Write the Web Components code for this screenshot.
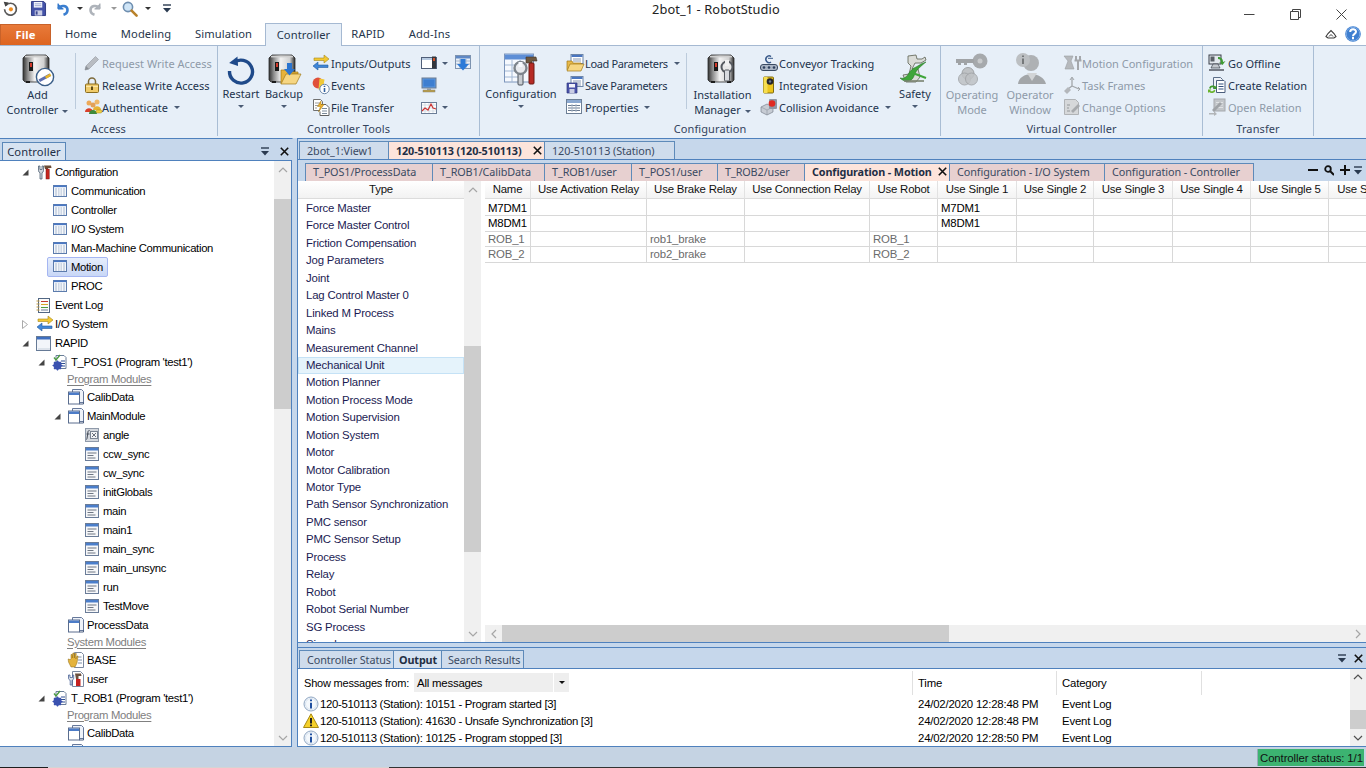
<!DOCTYPE html>
<html lang="en"><head><meta charset="utf-8"><title>2bot_1 - RobotStudio</title>
<style>
html,body{margin:0;padding:0;background:#fff}
body{width:1366px;height:768px;overflow:hidden;font-family:"Liberation Sans",sans-serif}
</style></head>
<body>
<rs-app>
  <rs-titlebar></rs-titlebar>
  <rs-ribbon-tabs></rs-ribbon-tabs>
  <rs-ribbon>
    <rs-group label="Access" style="width:218px">
      <rs-large icon="addctrl" style="width:75px" caret="inline">Add<br>Controller</rs-large>
      <rs-vsep></rs-vsep>
      <rs-col style="margin-left:8px;--iw:18px">
        <rs-small icon="pencil" disabled>Request Write Access</rs-small>
        <rs-small icon="lock">Release Write Access</rs-small>
        <rs-small icon="people" caret>Authenticate</rs-small>
      </rs-col>
    </rs-group>
    <rs-group label="Controller Tools" style="width:262px">
      <rs-large icon="restart" one style="width:42px;margin-left:2px" caret="below">Restart</rs-large>
      <rs-large icon="backup" one style="width:44px" caret="below">Backup</rs-large>
      <rs-col style="margin-left:6px;width:109px">
        <rs-small icon="io">Inputs/Outputs</rs-small>
        <rs-small icon="events">Events</rs-small>
        <rs-small icon="transfer">File Transfer</rs-small>
      </rs-col>
      <rs-col style="width:34px">
        <rs-small icon="window" caret></rs-small>
        <rs-small icon="monitor"></rs-small>
        <rs-small icon="chart" caret></rs-small>
      </rs-col>
      <rs-col>
        <rs-small icon="download"></rs-small>
      </rs-col>
    </rs-group>
    <rs-group label="Configuration" style="width:461px">
      <rs-large icon="config" one style="width:82px" caret="below">Configuration</rs-large>
      <rs-col style="margin-left:4px;width:120px">
        <rs-small icon="loadp" caret style="letter-spacing:-.35px">Load Parameters</rs-small>
        <rs-small icon="savep" style="letter-spacing:-.3px">Save Parameters</rs-small>
        <rs-small icon="props" caret>Properties</rs-small>
      </rs-col>
      <rs-vsep></rs-vsep>
      <rs-large icon="install" style="width:71px" caret="inline">Installation<br>Manager</rs-large>
      <rs-col style="margin-left:2px;width:135px">
        <rs-small icon="conveyor">Conveyor Tracking</rs-small>
        <rs-small icon="vision">Integrated Vision</rs-small>
        <rs-small icon="collision" caret>Collision Avoidance</rs-small>
      </rs-col>
      <rs-large icon="safety" one style="width:40px" caret="below">Safety</rs-large>
    </rs-group>
    <rs-group label="Virtual Controller" style="width:262px">
      <rs-large icon="key" style="width:60px;margin-left:1px" disabled>Operating<br>Mode</rs-large>
      <rs-large icon="person" style="width:56px" disabled>Operator<br>Window</rs-large>
      <rs-col style="margin-left:5px">
        <rs-small icon="motion" disabled>Motion Configuration</rs-small>
        <rs-small icon="frames" disabled>Task Frames</rs-small>
        <rs-small icon="options" disabled>Change Options</rs-small>
      </rs-col>
    </rs-group>
    <rs-group label="Transfer" style="width:111px">
      <rs-col style="margin-left:5px;--iw:20px">
        <rs-small icon="offline">Go Offline</rs-small>
        <rs-small icon="relation">Create Relation</rs-small>
        <rs-small icon="openrel" disabled>Open Relation</rs-small>
      </rs-col>
    </rs-group>
  </rs-ribbon>
  <rs-workspace>
    <rs-tree-panel slot="left">
      <rs-tree-row level="0" exp="open" icon="t-wrench">Configuration</rs-tree-row>
      <rs-tree-row level="1" icon="t-table">Communication</rs-tree-row>
      <rs-tree-row level="1" icon="t-table">Controller</rs-tree-row>
      <rs-tree-row level="1" icon="t-table">I/O System</rs-tree-row>
      <rs-tree-row level="1" icon="t-table">Man-Machine Communication</rs-tree-row>
      <rs-tree-row level="1" icon="t-table" selected>Motion</rs-tree-row>
      <rs-tree-row level="1" icon="t-table">PROC</rs-tree-row>
      <rs-tree-row level="0" icon="t-log">Event Log</rs-tree-row>
      <rs-tree-row level="0" exp="closed" icon="io">I/O System</rs-tree-row>
      <rs-tree-row level="0" exp="open" icon="t-rapid">RAPID</rs-tree-row>
      <rs-tree-row level="1" exp="open" icon="t-task">T_POS1 (Program 'test1')</rs-tree-row>
      <rs-tree-label>Program Modules</rs-tree-label>
      <rs-tree-row level="2" icon="t-module">CalibData</rs-tree-row>
      <rs-tree-row level="2" exp="open" icon="t-module">MainModule</rs-tree-row>
      <rs-tree-row level="3" icon="t-fn">angle</rs-tree-row>
      <rs-tree-row level="3" icon="t-proc">ccw_sync</rs-tree-row>
      <rs-tree-row level="3" icon="t-proc">cw_sync</rs-tree-row>
      <rs-tree-row level="3" icon="t-proc">initGlobals</rs-tree-row>
      <rs-tree-row level="3" icon="t-proc">main</rs-tree-row>
      <rs-tree-row level="3" icon="t-proc">main1</rs-tree-row>
      <rs-tree-row level="3" icon="t-proc">main_sync</rs-tree-row>
      <rs-tree-row level="3" icon="t-proc">main_unsync</rs-tree-row>
      <rs-tree-row level="3" icon="t-proc">run</rs-tree-row>
      <rs-tree-row level="3" icon="t-proc">TestMove</rs-tree-row>
      <rs-tree-row level="2" icon="t-module">ProcessData</rs-tree-row>
      <rs-tree-label>System Modules</rs-tree-label>
      <rs-tree-row level="2" icon="t-hand">BASE</rs-tree-row>
      <rs-tree-row level="2" icon="t-user">user</rs-tree-row>
      <rs-tree-row level="1" exp="open" icon="t-task">T_ROB1 (Program 'test1')</rs-tree-row>
      <rs-tree-label>Program Modules</rs-tree-label>
      <rs-tree-row level="2" icon="t-module">CalibData</rs-tree-row>
      <rs-tree-row level="2" icon="t-module"></rs-tree-row>
    </rs-tree-panel>
    <rs-doc-area slot="right"></rs-doc-area>
    <rs-output slot="bottom"></rs-output>
  </rs-workspace>
  <rs-statusbar></rs-statusbar>
</rs-app>
<script>
const cab = () => `
<defs><linearGradient id="cf" x1="0" x2="1" y1="0" y2="0"><stop offset="0" stop-color="#333"/><stop offset=".18" stop-color="#8b8b8b"/><stop offset=".45" stop-color="#f2f2f2"/><stop offset=".8" stop-color="#d0d0d0"/><stop offset="1" stop-color="#2a2a2a"/></linearGradient></defs>
<path d="M2 5l3-3h20l3 3v22l-2 2H4l-2-2z" fill="url(#cf)" stroke="#2b2b2b" stroke-width=".8"/>
<path d="M4 3.600h22" stroke="#cfcfcf" stroke-width="1.600"/>
<path d="M5 28v2h4v-2zM21 28v2h4v-2z" fill="#1c1c1c"/>
<rect x="8" y="9" width="4" height="9" fill="#1a1a1a"/><rect x="9" y="10" width="2" height="4" fill="#d33a2a"/>`;
const ICON = {
 app:[20,`<path d="M4.500 6.500A7 7 0 1 1 3 11" fill="none" stroke="#5a5a5a" stroke-width="2"/><path d="M2 2l6 1-4 5z" fill="#444"/><circle cx="10.500" cy="11" r="2.400" fill="#ee8d22"/>`],
 save:[16,`<path d="M.5.500h13l2 2v13H.5z" fill="#4352a8" stroke="#2c3780"/><rect x="3" y="1" width="9" height="6" fill="#f4f6fb"/><path d="M4 3h7M4 5h7" stroke="#9aa5d0"/><rect x="4" y="10" width="8" height="5.500" fill="#c9cde4"/><rect x="5" y="11" width="2" height="3.500" fill="#3b468f"/>`],
 undo:[14,`<path d="M3 1.500v5.500h5.500" fill="#2f74c8" stroke="#2f74c8"/><path d="M3.500 6.500C6 2.500 12.500 3.500 12.500 8c0 2.500-1.600 4-4 4.800" fill="none" stroke="#3b7fd0" stroke-width="2.600"/>`],
 redo:[14,`<path d="M11 1.500v5.500H5.500" fill="#a8adb5" stroke="#a8adb5"/><path d="M10.500 6.500C8 2.500 1.500 3.500 1.500 8c0 2.500 1.600 4 4 4.800" fill="none" stroke="#aeb3ba" stroke-width="2.600"/>`],
 search:[16,`<circle cx="6" cy="6" r="4.600" fill="#cfe5f7" stroke="#6f8fb0" stroke-width="1.600"/><path d="M9.600 9.600l5 5" stroke="#b9822a" stroke-width="2.600" stroke-linecap="round"/>`],
 pencil:[16,`<path d="M1 15l1-4L11.500 1.500l3 3L5 14z" fill="#b8bcc2" stroke="#9ba0a8" stroke-width=".7"/><path d="M1 15l1-4 3 3z" fill="#8a8f96"/>`],
 lock:[16,`<path d="M4.500 7V4.500a3.500 3.500 0 0 1 7 0V7" fill="none" stroke="#7d6a3a" stroke-width="1.500"/><rect x="1.500" y="7" width="13" height="8.500" rx="1" fill="#f0cb6a" stroke="#8a6d20"/><path d="M2 9.500h12" stroke="#fbe6a8"/><rect x="7" y="9.500" width="2" height="3.500" fill="#5f4a12"/>`],
 people:[18,`<circle cx="5" cy="5" r="2.500" fill="#eda958"/><path d="M1 14c0-5 8-5 8 0z" fill="#d8402a"/><circle cx="13" cy="4" r="2.500" fill="#f0b868"/><path d="M9 12c0-5 8-5 8 0z" fill="#e7b332"/><circle cx="9" cy="7" r="2.500" fill="#e2a058"/><path d="M5 16c0-5.500 8-5.500 8 0z" fill="#3f8a3a"/><rect x="12" y="12" width="6" height="3" rx="1.400" fill="#f0d040" stroke="#a08a10" stroke-width=".5"/>`],
 restart:[30,`<path d="M7.600 7.800A11.500 11.500 0 1 1 3.500 16" fill="none" stroke="#1f4a8a" stroke-width="3.400"/><path d="M11.500 1.500l.6 9.500-9-3z" fill="#1f4a8a"/>`],
 addctrl:[34,cab()+`<circle cx="24" cy="24" r="8.600" fill="#fff" stroke="#3a5e88" stroke-width="1.400"/><path d="M17.500 26.500l11-6 1.500 2.500-11 6z" fill="#5e6fb0"/><path d="M24 23.500l5-3 1.300 2.300-5 3z" fill="#e8b428"/>`],
 backup:[34,cab()+`<path d="M14 31V17h6l2 2h9v2h-6" fill="#e7b23a" stroke="#a07a18" stroke-width=".7"/><path d="M14 31l5-10h15l-5 10z" fill="#f6d683" stroke="#a07a18" stroke-width=".7"/><path d="M20 10h5v6h3l-5.500 6.500L17 16h3z" fill="#2b74cf"/>`],
 io:[18,`<path d="M2 6h10V3l5 4-5 4V8.500H2z" transform="translate(0 -2)" fill="#f2c832" stroke="#a4861a" stroke-width=".6"/><path d="M16 11H6V8l-5 4 5 4v-2.500h10z" fill="#3f86d8" stroke="#235a9c" stroke-width=".6"/>`],
 events:[18,`<circle cx="6" cy="7" r="5.400" fill="#e0503a"/><path d="M7.500 2.500l5 1-2 11-4-1z" fill="#f0c838"/><circle cx="12.500" cy="13" r="4.700" fill="#fff" stroke="#6c87a8"/><path d="M12.500 12v4M12.500 9.800v1.200" stroke="#2f5f9f" stroke-width="1.600"/>`],
 transfer:[18,`<path d="M1.500 1.500h7l2 2v9h-9z" fill="#fff" stroke="#707070"/><path d="M3 5h5M3 7.500h4M3 10h2" stroke="#9a9a9a"/><path d="M8 6.500h6l3 3v8H8v-4" fill="#fff" stroke="#606060"/><path d="M10 10.500h5M10 13h5M10 15.500h5" stroke="#7a8a9a"/><path d="M9 3L5.500 8.500h3L6.500 14l5.500-7.500H9z" fill="#edb02e" stroke="#a57a10" stroke-width=".5"/>`],
 window:[16,`<rect x=".5" y="2.500" width="15" height="11" fill="#fff" stroke="#4f5e78"/><rect x="1" y="3" width="14" height="2" fill="#b8cbe2"/><rect x="11" y="1.500" width="4" height="12" fill="#33363c"/><rect x="12" y="3" width="2" height="3" fill="#d0502a"/>`],
 monitor:[16,`<rect x="1" y="1" width="14" height="10" fill="#5c98e0" stroke="#6a7a90"/><rect x="2.500" y="2.500" width="11" height="7" fill="#3e7ed0"/><rect x="6" y="11" width="4" height="2" fill="#9aa5b0"/><rect x="2" y="13" width="12" height="2" fill="#c0a040" stroke="#7f7f7f" stroke-width=".5"/>`],
 chart:[16,`<rect x=".5" y="3.500" width="15" height="11" fill="#fff" stroke="#6b7d97"/><path d="M1 6h14M1 9h14M1 12h14M4 4v10M8 4v10M12 4v10" stroke="#c8d2de" stroke-width=".7"/><path d="M1 12l3-3 3 2 3-6 2 4 3 1" fill="none" stroke="#cc3535" stroke-width="1.200"/>`],
 download:[16,`<rect x=".5" y=".5" width="15" height="13" fill="#e9f0fa" stroke="#7d93b0"/><rect x="1" y="1" width="14" height="2.500" fill="#5f88c4"/><path d="M1 6h14M1 9h14M5 4v9M11 4v9" stroke="#a6b6ca"/><path d="M5.500 4h5v5h3.500l-6 6.500L2 9h3.500z" fill="#2b7ad8"/>`],
 config:[34,`<rect x=".5" y="1" width="29" height="28" fill="#f6f9fe" stroke="#7c95bb"/><rect x="1" y="1.500" width="28" height="5" fill="#5d8ed6"/><path d="M1 12h22M1 18h18M1 24h16M8 7v22M16 7v22" stroke="#a3b8d4"/><rect x="14" y="19" width="5" height="13" rx="1" fill="#c8ccd2" stroke="#4a5058"/><circle cx="16.500" cy="15" r="6" fill="#e8eaee" stroke="#7d848c" stroke-width="2.400"/><path d="M14.500 9v5h4V9" fill="#f6f9fe"/><path d="M22 4h10l1 4h-5v2h-6z" fill="#6e5840" stroke="#3e3228" stroke-width=".6"/><rect x="25" y="10" width="5" height="21" rx="1" fill="#b62a25" stroke="#6d1a15"/>`],
 loadp:[18,`<rect x="5" y=".5" width="12" height="9" fill="#fff" stroke="#6d85a8"/><rect x="5.500" y="1" width="11" height="2" fill="#4a76c0"/><path d="M7 5h8M7 7h8" stroke="#8a9ab4"/><path d="M1 16V7h5l1 2h8v2" fill="#e8b94a" stroke="#a07a18" stroke-width=".7"/><path d="M1 17l3-7h14l-3 7z" fill="#f6d683" stroke="#a07a18" stroke-width=".7"/>`],
 savep:[18,`<rect x="5" y=".5" width="12" height="10" fill="#fff" stroke="#6d85a8"/><rect x="5.500" y="1" width="11" height="2" fill="#4a76c0"/><path d="M7 5h8M7 7h8M7 9h8" stroke="#8a9ab4"/><path d="M1 7h10v10H1z" fill="#4a52a8" stroke="#2c3780" stroke-width=".7"/><rect x="3" y="8" width="6" height="3.500" fill="#f0f2fa"/><rect x="3.500" y="13" width="5" height="4" fill="#c9cde4"/>`],
 props:[16,`<rect x=".5" y=".5" width="15" height="14" fill="#fff" stroke="#6d7f96"/><rect x="1" y="1" width="14" height="3" fill="#8ba8d0"/><path d="M2 6.500h12M2 9h12M2 11.500h12" stroke="#6a7a90"/><path d="M6 5v8M10 5v8" stroke="#a8b6c8"/>`],
 install:[34,cab()+`<circle cx="21" cy="14" r="5.500" fill="#e8e8e8" stroke="#55595f" stroke-width="2"/><rect x="18.500" y="17" width="5" height="11" rx="1" fill="#d8dade" stroke="#55595f"/><path d="M19 7v6h4V7" fill="#f0f0f0"/>`],
 conveyor:[18,`<path d="M11 2.500A3.300 3.300 0 1 0 11 8" fill="none" stroke="#3a5a8a" stroke-width="1.500"/><path d="M8 4.300h5" stroke="#3a5a8a"/><rect x=".5" y="10.500" width="17" height="6" rx="2.500" fill="#a9b4c4" stroke="#3a4a62"/><circle cx="4" cy="13.500" r="1.300" fill="#2d3f5c"/><circle cx="9" cy="13.500" r="1.300" fill="#2d3f5c"/><circle cx="14" cy="13.500" r="1.300" fill="#2d3f5c"/>`],
 vision:[18,`<rect x="3.500" y="1" width="10" height="16" rx="1" fill="#edc51c" stroke="#7e6a10"/><rect x="3.500" y="1" width="4" height="16" fill="#f6de50"/><circle cx="10" cy="5.500" r="3.300" fill="#24242a"/><circle cx="10" cy="5.500" r="1.200" fill="#6a7a90"/>`],
 collision:[18,`<path d="M1 9l6-3 6 3v5l-6 3-6-3z" fill="#c7ccd4" stroke="#6c7480" stroke-width=".6"/><path d="M7 12l6-3M7 12v5M7 12L1 9" stroke="#8d95a0" stroke-width=".6"/><rect x="9" y="1" width="8" height="10" rx="1" fill="#8e96a4"/><circle cx="12" cy="5.500" r="3.300" fill="#e02a22"/>`],
 safety:[34,`<path d="M10 3l8-1 1 4h5l3-2 1 3-5 3-6 0-3 6h6l2 8-4 5H8L5 22l6-1 2-8-3-3z" fill="#dadcd8" stroke="#5a6050" stroke-width=".8"/><path d="M2 25c8 2 8-7 14-10s8-5 12-6c-6 5-10 8-12 14s-9 7-14 2z" fill="#3fa53a" stroke="#1f6a1e" stroke-width=".5"/><path d="M12 19l16 6" stroke="#3fa53a" stroke-width="2"/><path d="M6 28h20" stroke="#7a8270" stroke-width="1.600"/>`],
 key:[34,`<circle cx="25" cy="8" r="7.500" fill="#a6a9ac"/><circle cx="25" cy="8" r="2.500" fill="#c8cacc"/><path d="M1 6h18v4H12v2H9v-2H6v2H3v-2H1z" fill="#a0a3a6"/><circle cx="13" cy="20.500" r="6" fill="#bfc2c5" stroke="#9fa2a5"/><circle cx="9.500" cy="26" r="6" fill="#bfc2c5" opacity=".85" stroke="#9fa2a5"/><circle cx="16.500" cy="26" r="6" fill="#bfc2c5" opacity=".85" stroke="#9fa2a5"/>`],
 person:[34,`<circle cx="18" cy="10" r="8" fill="#aeb1b4"/><path d="M5 31c1-13 25-13 28 0z" fill="#a3a6a9"/><circle cx="10" cy="7" r="7" fill="#bcbfc2"/><path d="M10 5.500v5.500M10 2.500v1.500" stroke="#6d7073" stroke-width="1.800"/><path d="M14 20l5 8 5-8" fill="#d2d4d6"/>`],
 motion:[18,`<path d="M1 2h9l-2 5 3 8H2l3-8z" fill="#b6b9bd" stroke="#9a9da2" stroke-width=".6"/><path d="M13 2v5M17 2v5M11.500 6.500h7M15 7v9" stroke="#a4a7ab" stroke-width="2"/>`],
 frames:[18,`<path d="M9 10V2M9 10l7 3M9 10l-4 3" stroke="#a2a6aa" stroke-width="1.300" fill="none"/><path d="M7 4l2-3 2 3M15 15l2-2-2-2" stroke="#a2a6aa" fill="none"/><path d="M1 15l4-4 3 3-4 4z" fill="#b4b7bb"/>`],
 options:[18,`<path d="M1.500 1.500h11l3 3v12h-14z" fill="#d6d8da" stroke="#b0b3b6"/><path d="M4 7h3M4 10h2M4 13h3" stroke="#94979a" stroke-width="1.200"/><path d="M8 13l7-7 2 2-7 7z" fill="#a7aaad"/>`],
 offline:[18,`<rect x="1" y="1" width="12" height="9" fill="#e3e8ee" stroke="#3a3f48"/><rect x="2.500" y="2.500" width="4" height="5" fill="#5a5f66"/><path d="M3 14l2-4h5l2 4z" fill="#c4c8ce" stroke="#3a3f48" stroke-width=".7"/><path d="M1 16h15" stroke="#3a3f48" stroke-width="1.300"/><path d="M10 3c3 0 5 1.500 5 5l2.500-1-3 4-3.500-3 2 .5c0-2.500-1-3.500-3-3.500z" fill="#3f9a34"/>`],
 relation:[18,`<path d="M5.500 1.500h7l2 2v9h-9z" fill="#eef2f8" stroke="#5b6d88"/><path d="M8.500 4.500h7.500l1 1v11H8.500z" fill="#fff" stroke="#4a5d7c"/><path d="M10.500 8h5M10.500 10.500h5M10.500 13h5" stroke="#33507e"/><path d="M1 12a4 4 0 0 1 6.500-1.500l1-1v3.500H5l1.300-1.200A2.300 2.300 0 0 0 2.500 13z" fill="#3f9a2c"/><path d="M7.500 14.500a4 4 0 0 1-6.500 1.500l-1 1v-3.500h3.500L2.200 14.700a2.300 2.300 0 0 0 3.800-1z" fill="#6ab32c"/>`],
 openrel:[18,`<rect x="6" y="1" width="11" height="12" fill="#c2c5c9" stroke="#a5a8ac"/><path d="M8 4.500h7M8 7h7M8 9.500h7" stroke="#e0e2e4"/><path d="M4 12l8-8 2 2-8 8z" fill="#a0a3a7"/><path d="M1 15h5v-2l3 3-3 2v-1.500H1z" fill="#b2b5b8"/>`],
 't-wrench':[16,`<path d="M2.500 2v4.500a2.500 2.500 0 0 0 1.500 2.300V15h2V8.800A2.500 2.500 0 0 0 7.500 6.500V2L6 2v3.500H4V2z" fill="#cfd4da" stroke="#3c5066" stroke-width=".7"/><path d="M8 1.500h7l.5 2.500H12v1h-3z" fill="#6b4d35"/><rect x="10" y="5" width="3.200" height="10" fill="#c5261f" stroke="#7c1610" stroke-width=".5"/>`],
 't-table':[15,`<g transform="translate(1 0)"><rect x=".5" y="1.500" width="13" height="11" fill="#f4f7fb" stroke="#5c7cad"/><path d="M1 2.300h12" stroke="#4a78c4" stroke-width="1.600"/><path d="M2 5h10M2 7h10M2 9h10M2 11h10" stroke="#9fb0c8" stroke-width=".9"/><path d="M4.500 4v8M7 4v8M9.500 4v8" stroke="#fff" stroke-width=".8"/></g>`],
 't-log':[15,`<rect x="2.500" y=".5" width="11" height="14" fill="#fbfbfb" stroke="#516683"/><path d="M.5 3h3M.5 6h3M.5 9h3M.5 12h3" stroke="#c19a42"/><path d="M5 3.500h7" stroke="#c03a30"/><path d="M5 6.500h7" stroke="#d9a62a"/><path d="M5 9.500h7" stroke="#4c9a40"/><path d="M5 12h7" stroke="#6a7e9a"/>`],
 't-rapid':[15,`<rect x=".5" y=".5" width="14" height="14" fill="#f2f5fa" stroke="#667a96"/><rect x="1" y="1" width="13" height="2.500" fill="#3e6fc0"/><path d="M2 13h12" stroke="#c7d0dc"/>`],
 't-task':[17,`<path d="M4 1.500h8l2 2v11H4z" fill="#fff" stroke="#6a7d9a"/><path d="M2 3.500l2 2.500 4-5" fill="none" stroke="#4a9a40" stroke-width="1.300"/><path d="M9 7h4M9 9.500h4M9 12h4" stroke="#2e4f92"/><circle cx="5.500" cy="11.500" r="4.200" fill="#3b52b0"/><circle cx="5.500" cy="11.500" r="1.500" fill="#dfe6f8"/><path d="M5.500 6.500v10M.5 11.500h10M2 8l7 7M9 8l-7 7" stroke="#3b52b0" stroke-width="1.200"/>`],
 't-module':[16,`<path d="M4.500 .5h9l2 2v11h-11z" fill="#eef2f9" stroke="#66789a"/><rect x=".5" y="3" width="11" height="12" fill="#fff" stroke="#5a6d8e"/><rect x="1" y="3.500" width="10" height="2.500" fill="#4c7cc8"/><path d="M11.500 15h4V13" fill="none" stroke="#4d5f80"/>`],
 't-fn':[15,`<g transform="translate(1 0)"><rect x=".5" y=".5" width="13" height="13" fill="#d4d8de" stroke="#8f9aaa"/><path d="M4.500 2.500C3 2.500 3 3.500 2.800 5l-.8 5.500c-.2 1-1 1-1 1M1.500 6h3" fill="none" stroke="#454c58"/><rect x="5.500" y="3.500" width="7" height="7" fill="#f3f4f6" stroke="#7a8492"/><path d="M7 5l4 4M11 5l-4 4" stroke="#59616e" stroke-width=".9"/></g>`],
 't-proc':[15,`<g transform="translate(1 0)"><rect x=".5" y=".5" width="13" height="13" fill="#f6f7f9" stroke="#6a7c98"/><rect x="1" y="1" width="12" height="2.500" fill="#4a7ecb"/><path d="M2.500 6h9M2.500 8.500h6M2.500 11h8" stroke="#6e7683"/></g>`],
 't-hand':[16,`<path d="M6.500 .5h7l2 2v13h-9z" fill="#fff" stroke="#7a889e"/><path d="M9.500 5h4M10 8h4M10 11h4" stroke="#7f90a8"/><path d="M3 7V2.500h1.300V6l.6-5h1.300l.1 5 .8-4.500h1.200L7.800 7l1.200-3h1l-1 7-2 4H3l-2.500-5-.3-3h1L2 8z" fill="#e4b33c" stroke="#8d6a14" stroke-width=".5"/>`],
 't-user':[16,`<path d="M4.500 .5h8l3 3v12h-11z" fill="#fff" stroke="#7a889e"/><path d="M.5 4v3c0 1.300.8 2 1.700 2.300V14H4V9.300C5 9 5.700 8.300 5.700 7V4L4.500 4v2.500H2V4z" fill="#dfe3e8" stroke="#36528c" stroke-width=".7"/><rect x="8" y="8" width="4.500" height="7" fill="#c5221f"/><path d="M7 2.500h6l.5 2.500h-3v3H8z" fill="#6d5240"/>`],
 info:[16,`<circle cx="8" cy="8" r="7" fill="#f4f8fc" stroke="#8fa6c2"/><circle cx="8" cy="8" r="5.500" fill="none" stroke="#d9e4f0"/><path d="M8 6.800V12.500" stroke="#1f4fa0" stroke-width="2"/><path d="M8 3.500v1.800" stroke="#1f4fa0" stroke-width="2"/>`],
 warn:[16,`<path d="M8 .8L15.500 14.500H.5z" fill="#f5d02a" stroke="#a88a14" stroke-linejoin="round"/><path d="M8 5v5.500" stroke="#222" stroke-width="2"/><path d="M8 11.500v1.800" stroke="#222" stroke-width="2"/>`],
 help:[16,`<circle cx="8" cy="8" r="7.800" fill="#3f7fd0"/><circle cx="8" cy="8" r="6.800" fill="none" stroke="#7aaae4"/><path d="M5.200 6c0-3.600 5.800-3.600 5.800-.2 0 2.200-3 2-3 4.400" fill="none" stroke="#fff" stroke-width="2"/><path d="M8 11v2.200" stroke="#fff" stroke-width="2"/>`],
 collapse:[12,`<path d="M1 8.500l2-3 3-3 3 3 2 3-2 1.500H3z" fill="none" stroke="#3a3a3a" stroke-width="1.100"/><path d="M4 8.500l2-2 2 2" fill="none" stroke="#3a3a3a"/>`],
};

function el(name, css, html, setup){
  customElements.define(name, class extends HTMLElement{
    connectedCallback(){
      if(this.shadowRoot) return;
      const r=this.attachShadow({mode:'open'});
      r.innerHTML=`<style>${css}</style>`+(typeof html==='function'?html(this):html);
      if(setup) setup(this,r);
    }
  });
}

el('rs-icon',':host{display:inline-flex;flex:none;line-height:0}svg{display:block;overflow:visible}',h=>{
  const d=ICON[h.getAttribute('name')]||[16,''];
  const vb=d[0]; const sz=h.getAttribute('size')||vb;
  return `<svg xmlns="http://www.w3.org/2000/svg" width="${sz}" height="${sz}" viewBox="0 0 ${vb} ${vb}">${d[1]}</svg>`;
});
el('rs-caret',':host{display:inline-block;flex:none;width:0;height:0;border:3px solid transparent;border-bottom:0;border-top:3px solid var(--c,#4a5b74);vertical-align:middle}','');
el('rs-x',':host{display:inline-flex;flex:none;line-height:0}',`<svg width="9" height="9" viewBox="0 0 9 9"><path d="M.8.800l7.400 7.400M8.200.800L.8 8.200" stroke="#111" stroke-width="1.600"/></svg>`);
el('rs-menu-glyph',':host{display:inline-flex;flex:none;line-height:0}',`<svg width="10" height="9" viewBox="0 0 10 9"><path d="M1 1h8" stroke="#2a3a50" stroke-width="1.400"/><path d="M1 4h8L5 8.500z" fill="#2a3a50"/></svg>`);

el('rs-app',':host{display:flex;flex-direction:column;width:1366px;height:768px;overflow:hidden;background:#c6d7eb;color:#000;font-family:"Liberation Sans",sans-serif}','<slot></slot>');

el('rs-titlebar',`:host{display:flex;flex:none;height:23px;background:#fff;font:12.8px "Noto Sans",sans-serif;color:#222}
.qat{display:flex;align-items:center;width:652px;height:17px;flex:none}
.t{width:125px;flex:none;line-height:19px;white-space:nowrap;letter-spacing:.1px}
.win{margin-left:auto;display:flex;height:28px;align-items:center;padding-right:2px}
.win span{display:flex;width:46px;justify-content:center;line-height:0}
rs-caret{--c:#333}`,`
<div class="qat">
 <rs-icon name="app" size="17" style="margin-left:2px"></rs-icon>
 <rs-icon name="save" size="15" style="margin-left:12px"></rs-icon>
 <rs-icon name="undo" style="margin-left:9px"></rs-icon><rs-caret style="margin-left:8px"></rs-caret>
 <rs-icon name="redo" style="margin-left:6px"></rs-icon><rs-caret style="margin-left:8px;--c:#999"></rs-caret>
 <rs-icon name="search" style="margin-left:5px"></rs-icon><rs-caret style="margin-left:7px"></rs-caret>
 <rs-menu-glyph style="margin-left:11px"></rs-menu-glyph>
</div>
<div class="t">2bot_1 - RobotStudio</div>
<div class="win">
 <span><svg width="11" height="11"><path d="M0 5.500h10.500" stroke="#444"/></svg></span>
 <span><svg width="11" height="11"><path d="M.5 2.500h8v8h-8zM2.500 2.500v-2h8v8h-2" fill="none" stroke="#444"/></svg></span>
 <span><svg width="11" height="11"><path d="M.5.500l10 10M10.500.500l-10 10" stroke="#444"/></svg></span>
</div>`);

el('rs-ribbon-tabs',`:host{display:flex;flex:none;height:22px;background:#fff;font:11.2px "Noto Sans",sans-serif;color:#26364c;letter-spacing:.1px;position:relative;z-index:2;white-space:nowrap}
.f{width:51px;height:21px;margin-top:1px;box-sizing:border-box;background:linear-gradient(#e87a3a,#dd6420);border:1px solid #c8622a;border-bottom:0;color:#fff;font-weight:700;display:flex;align-items:center;justify-content:center;padding-bottom:1px}
.t{height:22px;display:flex;align-items:center;justify-content:center;flex:none;box-sizing:border-box;padding-bottom:1px}
.a{background:#e7eff8;border:1px solid #a5b9d2;border-bottom:0;height:23px}
.r{margin-left:auto;display:flex;align-items:center;gap:8px;padding-right:5px}`,`
<div class="f">File</div>
<div class="t" style="width:60px">Home</div>
<div class="t" style="width:50px;margin-left:10px">Modeling</div>
<div class="t" style="width:55px;margin-left:25px">Simulation</div>
<div class="t a" style="width:77px;margin-left:14px">Controller</div>
<div class="t" style="width:30px;margin-left:11px">RAPID</div>
<div class="t" style="width:41px;margin-left:26px">Add-Ins</div>
<div class="r"><rs-icon name="collapse"></rs-icon><rs-icon name="help"></rs-icon></div>`);

el('rs-ribbon',`:host{display:flex;flex:none;height:90px;background:#e7eff8;border-top:1px solid #a5b9d2}`,'<slot></slot>');

el('rs-group',`:host{display:flex;flex-direction:column;flex:none;box-sizing:border-box;height:90px;border-right:1px solid #a9bdd4;font:11px "Noto Sans",sans-serif;color:#22334d}
.c{flex:1;display:flex;min-height:0;padding-top:6px}
.l{height:14px;line-height:14px;text-align:center;color:#33435c;white-space:nowrap;letter-spacing:.1px;flex:none}`,
h=>`<div class="c"><slot></slot></div><div class="l">${h.getAttribute('label')}</div>`);

el('rs-vsep',':host{display:block;flex:none;width:1px;height:56px;margin-top:1px;background:#bccbdc}','');
el('rs-col',':host{display:flex;flex-direction:column;flex:none}','<slot></slot>');

el('rs-small',`:host{display:flex;align-items:center;height:22px;flex:none;white-space:nowrap}
:host([disabled]){color:#8e9aa8}
.i{width:var(--iw,19px);flex:none;display:flex;align-items:center;height:18px}
.n{width:21px}
rs-caret{margin-left:6px}
.n + slot + rs-caret{margin-left:0}`,h=>{
  const ic=h.getAttribute('icon'), empty=!h.textContent.trim();
  return `<span class="i${empty?' n':''}"><rs-icon name="${ic}"></rs-icon></span><slot></slot>${h.hasAttribute('caret')?'<rs-caret></rs-caret>':''}`;
});

el('rs-large',`:host{display:flex;flex-direction:column;align-items:center;flex:none;height:68px;line-height:15px;text-align:center;white-space:nowrap}
:host([disabled]){color:#8e9aa8}
.i{height:35px;display:flex;align-items:center;justify-content:center;flex:none}
:host([one]) .t{margin-top:-1px}
.b{display:block;margin:4px 0 0}
rs-caret{margin-left:4px}`,h=>{
  const c=h.getAttribute('caret');
  return `<div class="i"><rs-icon name="${h.getAttribute('icon')}"></rs-icon></div><div class="t"><slot></slot>${c==='inline'?'<rs-caret></rs-caret>':''}</div>${c==='below'?'<rs-caret class="b"></rs-caret>':''}`;
});

el('rs-workspace',`:host{display:grid;flex:none;height:611px;box-sizing:border-box;border-top:2px solid #e7eff8;grid-template-columns:293px 4px 1069px;grid-template-rows:505px 104px;background:#c6d7eb}
.l{grid-row:1/3;grid-column:1}.r{grid-row:1;grid-column:3;min-width:0;min-height:0}.b{grid-row:2;grid-column:3;min-width:0;min-height:0}
.m{grid-row:1/3;grid-column:2}`,`
<div class="l"><slot name="left"></slot></div><div class="m"></div>
<div class="r"><slot name="right"></slot></div><div class="b"><slot name="bottom"></slot></div>`);

el('rs-scrollbar',`:host{display:flex;flex:none;background:#f0f0f0}
:host([o=v]){flex-direction:column;width:var(--s,17px)}
:host([o=h]){flex-direction:row;height:var(--s,17px)}
.a{flex:none;width:100%;height:100%;display:flex;align-items:center;justify-content:center}
:host([o=v]) .a{height:var(--s,17px)}
:host([o=h]) .a{width:var(--s,17px);height:100%}
.t{background:#cdcdcd;flex:none}
.g{flex:1}`,h=>{
  const v=h.getAttribute('o')==='v', st=+h.getAttribute('start'), len=+h.getAttribute('len');
  const up=v?'M1 5l4-4 4 4':'M5 1L1 5l4 4', dn=v?'M1 1l4 4 4-4':'M1 1l4 4-4 4';
  const ch=d=>`<svg width="${v?10:6}" height="${v?6:10}" viewBox="0 0 ${v?10:6} ${v?6:10}"><path d="${d}" fill="none" stroke="${h.getAttribute('dark')!=null?'#505050':'#a6a6a6'}" stroke-width="1.200"/></svg>`;
  const size=v?`height:${len}px;margin-top:${st}px`:`width:${len}px;margin-left:${st}px`;
  return `<div class="a">${ch(up)}</div><div class="g" style="display:flex;flex-direction:${v?'column':'row'}"><div class="t" style="${size}"></div></div><div class="a">${ch(dn)}</div>`;
});

el('rs-tree-panel',`:host{display:flex;flex-direction:column;height:609px;box-sizing:border-box;padding-top:3px;border-top:1px solid #4f81bd;border-right:1px solid transparent}
.s{height:18px;flex:none;display:flex;align-items:stretch}
.tab{margin-left:2px;width:64px;box-sizing:border-box;background:#d7e3f1;border:1px solid #5a87b8;border-bottom:0;font:11.2px "Noto Sans",sans-serif;color:#1e2e46;display:flex;align-items:center;justify-content:center;letter-spacing:.1px}
.c{margin-left:auto;display:flex;align-items:center;gap:10px;padding-right:3px}
.b{flex:1;display:flex;background:#fff;border:1px solid #4f81bd;border-left:0;min-height:0;height:587px;box-sizing:border-box}
.list{flex:1;overflow:hidden;padding-top:1.500px;font:11.3px "Liberation Sans",sans-serif}`,`
<div class="s"><div class="tab">Controller</div><div class="c"><rs-menu-glyph></rs-menu-glyph><rs-x></rs-x></div></div>
<div class="b"><div class="list"><slot></slot></div><rs-scrollbar o="v" start="21" len="210" style="--s:17px"></rs-scrollbar></div>`);

el('rs-tree-row',`:host{display:flex;align-items:center;height:19px;white-space:nowrap;color:#000;letter-spacing:-.32px}
.e{width:16px;flex:none;display:flex;align-items:center;padding-left:2px;box-sizing:border-box}
.i{display:flex;align-items:center;height:19px;box-sizing:border-box}
.ic{width:19px;flex:none;display:flex;align-items:center}
:host([selected]) .i{margin-left:-5px;padding:0 4px 0 4px;height:20px;margin-top:-1px;background:linear-gradient(#e6eefc,#c8d7f6);border:1px solid #a5b6f2;border-radius:2px}`,h=>{
  const lvl=+h.getAttribute('level'), ex=h.getAttribute('exp');
  const g = ex==='open'?`<svg width="7" height="7" viewBox="0 0 7 7"><path d="M6.500.5v6h-6z" fill="#444"/></svg>`:ex==='closed'?`<svg width="6" height="9" viewBox="0 0 6 9"><path d="M.5.5l5 4-5 4z" fill="#fff" stroke="#aaa"/></svg>`:'';
  const pad=20+lvl*16;
  return `<div style="width:${pad}px;flex:none"></div><div class="e">${g}</div><div class="i"><span class="ic"><rs-icon name="${h.getAttribute('icon')}"></rs-icon></span><slot></slot></div>`;
});
el('rs-tree-label',`:host{display:block;height:16px;line-height:15px;padding-left:67px;color:#808080;letter-spacing:-.32px;white-space:nowrap}span{text-decoration:underline;text-underline-offset:2px}`,'<span><slot></slot></span>');

el('rs-tab',`:host{display:flex;align-items:center;flex:none;box-sizing:border-box;height:100%;padding:0 0 var(--pb,1px) var(--p,7px);border:1px solid #5e8ab9;border-bottom:0;margin-right:-1px;white-space:nowrap;font:10.8px "Noto Sans",sans-serif;color:#3a4a62;background:var(--bg,#cfdcec);letter-spacing:-.08px}
:host([active]){font-weight:700;background:var(--abg,#fde4db);color:#222e44;letter-spacing:-.12px}
rs-x{margin-left:auto;margin-right:2px}`,h=>`<slot></slot>${h.hasAttribute('close')?'<rs-x></rs-x>':''}`);

el('rs-doc-area',`:host{display:flex;flex-direction:column;height:505px;box-sizing:border-box;padding-top:2px;border-left:1px solid #4f81bd;border-top:1px solid #4f81bd}
.r1{height:18px;display:flex;padding-left:1px;flex:none}
.tr2{flex:none;border-top:1px solid #4f81bd;height:22px;box-sizing:border-box;padding:3px 0 0 7px;display:flex;background:#c6d7eb;--pb:3px}
.ctl{margin-left:auto;display:flex;align-items:center;gap:6px;padding:0 3px 4px 0}
.p{--bg:#e7d0d0}
.main{flex:1;display:flex;min-height:0;background:#fff;border-bottom:1px solid #4f81bd}
.right{flex:1;display:flex;flex-direction:column;min-width:0;min-height:0}
.gw{flex:1;overflow:hidden;min-height:0}`,`
<div class="r1">
 <rs-tab style="width:90px">2bot_1:View1</rs-tab>
 <rs-tab active close style="width:157px">120-510113 (120-510113)</rs-tab>
 <rs-tab style="width:131px">120-510113 (Station)</rs-tab>
</div>
<div class="tr2">
 <rs-tab class="p" style="width:128px">T_POS1/ProcessData</rs-tab>
 <rs-tab class="p" style="width:113px">T_ROB1/CalibData</rs-tab>
 <rs-tab class="p" style="width:88px">T_ROB1/user</rs-tab>
 <rs-tab class="p" style="width:87px">T_POS1/user</rs-tab>
 <rs-tab class="p" style="width:88px">T_ROB2/user</rs-tab>
 <rs-tab active close style="width:146px">Configuration - Motion</rs-tab>
 <rs-tab class="p" style="width:156px">Configuration - I/O System</rs-tab>
 <rs-tab class="p" style="width:150px">Configuration - Controller</rs-tab>
 <div class="ctl">
  <svg width="10" height="10"><path d="M0 5h10" stroke="#111" stroke-width="2"/></svg>
  <svg width="10" height="11"><circle cx="4" cy="4" r="2.800" fill="none" stroke="#111" stroke-width="1.800"/><path d="M6 6l4 4" stroke="#111" stroke-width="2"/></svg>
  <svg width="10" height="10"><path d="M0 5h10M5 0v10" stroke="#111" stroke-width="2"/></svg>
  <rs-menu-glyph style="margin-left:-3px"></rs-menu-glyph>
 </div>
</div>
<div class="main">
 <rs-type-list></rs-type-list>
 <div class="right"><div class="gw"><rs-grid></rs-grid></div>
 <rs-scrollbar o="h" start="0" len="447" style="--s:17px;width:100%"></rs-scrollbar></div>
</div>`);

const types=['Force Master','Force Master Control','Friction Compensation','Jog Parameters','Joint','Lag Control Master 0','Linked M Process','Mains','Measurement Channel','Mechanical Unit','Motion Planner','Motion Process Mode','Motion Supervision','Motion System','Motor','Motor Calibration','Motor Type','Path Sensor Synchronization','PMC sensor','PMC Sensor Setup','Process','Relay','Robot','Robot Serial Number','SG Process','Signal'];
el('rs-type-list',`:host{display:flex;flex:none;width:187px;font:11.4px "Liberation Sans",sans-serif;color:#1a1a52;background:#fff;overflow:hidden;letter-spacing:-.18px}
.c{width:166px;flex:none;overflow:hidden;display:flex;flex-direction:column}
.h{height:17px;flex:none;background:linear-gradient(#fff,#f2f2f2);border-bottom:1px solid #dcdcdc;text-align:center;line-height:17px;color:#111}
.l{flex:1;overflow:hidden;padding-top:1px}
.r{height:17.44px;line-height:17px;padding-left:8px;box-sizing:border-box;white-space:nowrap}
.r.s{background:#e5f3fb;box-shadow:inset 0 0 0 1px #c5e2f6}`,()=>`<div class="c"><div class="h">Type</div><div class="l">${types.map(t=>`<div class="r${t==='Mechanical Unit'?' s':''}">${t}</div>`).join('')}</div></div><rs-scrollbar o="v" start="148" len="206" style="--s:17px"></rs-scrollbar><div style="width:4px;flex:none"></div>`);

const cols=[['Name',46],['Use Activation Relay',116],['Use Brake Relay',98],['Use Connection Relay',125],['Use Robot',68],['Use Single 1',79],['Use Single 2',77],['Use Single 3',79],['Use Single 4',78],['Use Single 5',78],['Use Single 6',80]];
const rows=[['M7DM1','','','','','M7DM1'],['M8DM1','','','','','M8DM1'],['ROB_1','','rob1_brake','','ROB_1',''],['ROB_2','','rob2_brake','','ROB_2','']];
el('rs-grid',`:host{display:grid;grid-template-columns:${cols.map(c=>c[1]+'px').join(' ')};grid-template-rows:18px 17px 15.5px 15.5px 15.5px;font:11.4px "Liberation Sans",sans-serif;width:881px;overflow:hidden;letter-spacing:-.18px}
.h{background:linear-gradient(#fff,#f3f3f3);border-right:1px solid #e2e2e2;border-bottom:1px solid #dcdcdc;text-align:center;line-height:17px;white-space:nowrap;color:#111;box-sizing:border-box;overflow:hidden}
.c{border-right:1px solid #d8d8d8;border-bottom:1px solid #d8d8d8;box-sizing:border-box;line-height:14px;padding-left:3px;white-space:nowrap;color:#000}
.c.first{line-height:18px}
.g{color:#6b6b6b}`,()=>cols.map(c=>`<div class="h">${c[0]}</div>`).join('')+rows.map((r,i)=>cols.map((c,j)=>`<div class="c${i>1?' g':''}${i==0?' first':''}">${r[j]||''}</div>`).join('')).join(''));

el('rs-output',`:host{display:flex;flex-direction:column;height:104px;box-sizing:border-box;padding-top:4px;font:11.4px "Liberation Sans",sans-serif;color:#000;letter-spacing:-.2px;border-left:1px solid #4f81bd}
.top{border-top:1px solid #4f81bd;height:22px;box-sizing:border-box;flex:none;display:flex;padding:2px 0 0 1px;border-bottom:1px solid #4f81bd}
.top rs-tab{height:18px}
.c{margin-left:auto;display:flex;align-items:center;gap:7px;padding-right:3px;padding-bottom:2px}
.body{height:77px;flex:none;background:#fff;display:flex;border-bottom:1px solid #4f81bd}
.g{flex:1;display:grid;grid-template-columns:614px 144px 145px 1fr;grid-template-rows:26px 17px 17px 17px;overflow:hidden;align-items:center}
.s{display:flex;align-items:center;padding:1px 0 0 6px}
.sl{width:110px;flex:none;font-size:11px;white-space:nowrap}
.cb{display:flex;align-items:center;width:155px;height:19px;background:#eee;padding-left:3px;box-sizing:border-box;--c:#111}
.cb i{margin-left:auto;width:15px;height:19px;border-left:1px solid #fff;display:flex;align-items:center;justify-content:center}
.hd{height:24px;border-left:1px solid #e0e0e0;padding-left:5px;line-height:24px;box-sizing:border-box;align-self:start;margin-top:2px}
.m{display:flex;align-items:center;gap:1px;padding-left:5px;white-space:nowrap;letter-spacing:-.32px}
.t{padding-left:6px;white-space:nowrap}`,`
<div class="top">
 <rs-tab style="width:95px">Controller Status</rs-tab>
 <rs-tab active style="width:49px;--abg:#d7e3f1;--p:5px">Output</rs-tab>
 <rs-tab style="width:83px;--p:6px">Search Results</rs-tab>
 <div class="c"><rs-menu-glyph></rs-menu-glyph><rs-x></rs-x></div>
</div>
<div class="body">
 <div class="g">
  <div class="s"><span class="sl">Show messages from:</span><div class="cb">All messages<i><rs-caret></rs-caret></i></div></div>
  <div class="hd">Time</div><div class="hd">Category</div><div class="hd"></div>
  <div class="m"><rs-icon name="info"></rs-icon>120-510113 (Station): 10151 - Program started [3]</div><div class="t">24/02/2020 12:28:48 PM</div><div class="t">Event Log</div><div></div>
  <div class="m"><rs-icon name="warn"></rs-icon>120-510113 (Station): 41630 - Unsafe Synchronization [3]</div><div class="t">24/02/2020 12:28:48 PM</div><div class="t">Event Log</div><div></div>
  <div class="m"><rs-icon name="info"></rs-icon>120-510113 (Station): 10125 - Program stopped [3]</div><div class="t">24/02/2020 12:28:50 PM</div><div class="t">Event Log</div><div></div>
 </div>
 <rs-scrollbar o="v" dark start="25" len="19" style="--s:16px"></rs-scrollbar>
</div>`);

el('rs-statusbar',`:host{display:flex;flex:none;height:22px;background:#c5d3e3;justify-content:flex-end;box-sizing:border-box;font:11.4px "Liberation Sans",sans-serif;position:relative;padding:2px 2px 3px 0}
.g{width:107px;background:#3cb371;border-left:1px solid #9ab;display:flex;align-items:center;padding-left:2px;box-sizing:border-box;white-space:nowrap;color:#111;letter-spacing:-.1px;overflow:hidden}
.strip{position:absolute;left:0;right:0;bottom:0;height:2px;background:linear-gradient(90deg,#1e1e1e 0 48px,#d4d4d4 48px 389px,#333 389px)}`,
`<div class="g">Controller status: 1/1</div><div class="strip"></div>`);
</script>
</body></html>
